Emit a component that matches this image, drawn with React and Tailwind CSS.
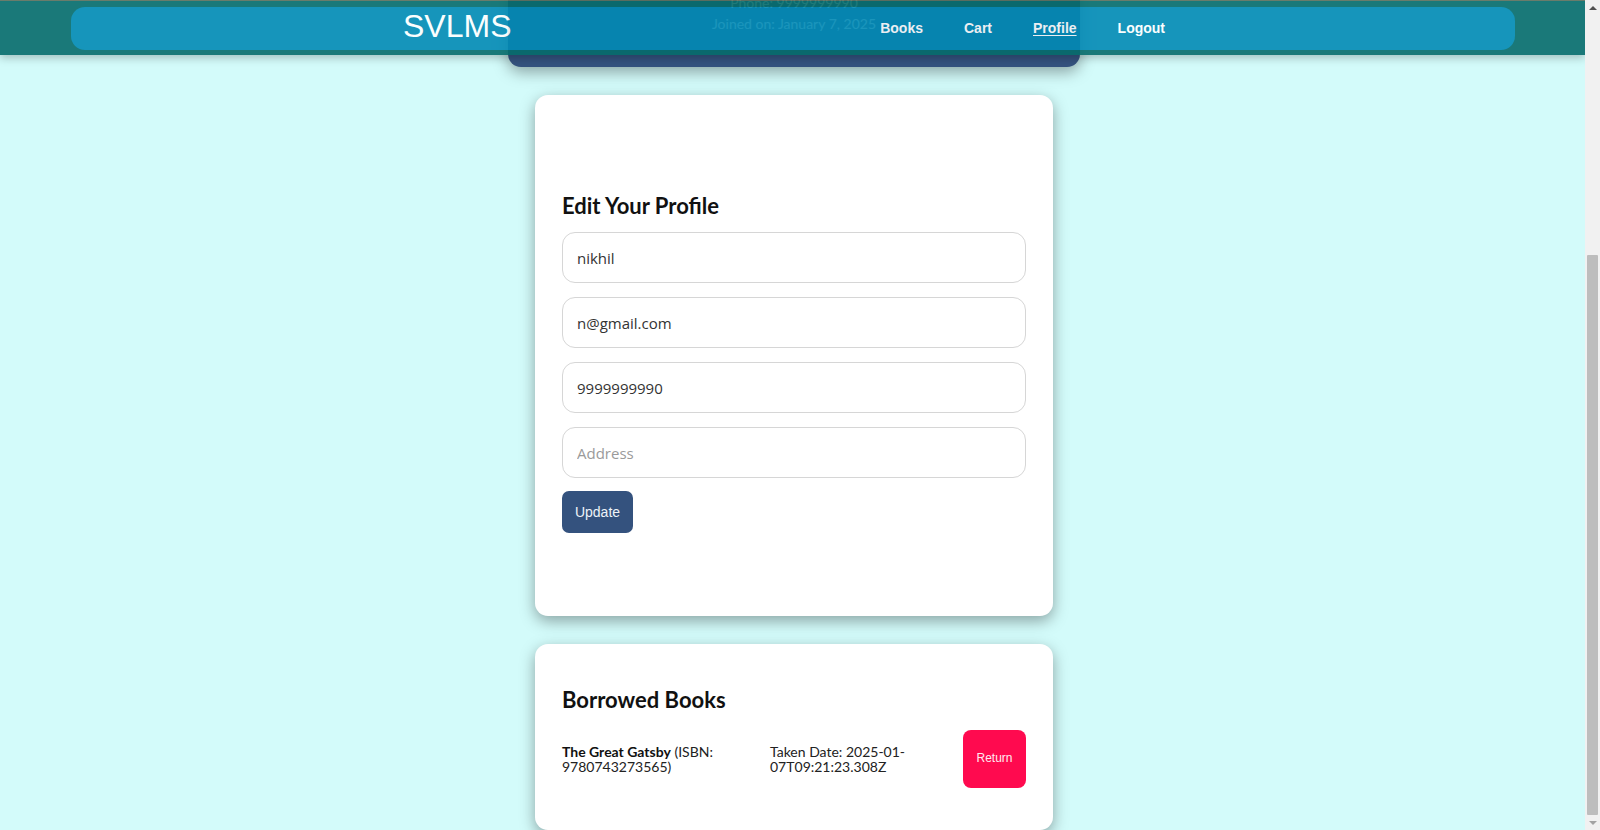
import React from "react";

const navLinks = [
  { label: "Books", active: false },
  { label: "Cart", active: false },
  { label: "Profile", active: true },
  { label: "Logout", active: false },
];

function Header() {
  return (
    <header className="absolute left-0 right-0 top-0 z-10 h-[55px] border-t border-[#5f6f5c] bg-[#066c6c] pl-[71px] pr-[70px] pt-[6px] opacity-90 shadow-[0_3px_8px_rgba(0,0,0,0.25)]">
      <div className="flex h-[43px] items-center justify-between rounded-[14px] bg-[#028ab5] pl-[332px] pr-[350px] font-['Liberation_Sans',Arial,sans-serif] text-white">
        <h1 className="mb-[6px] text-[32px] font-normal leading-none">SVLMS</h1>
        <nav className="flex items-center gap-[41px] text-[14px] font-bold">
          {navLinks.map((link) => (
            <a
              key={link.label}
              href="#"
              className={link.active ? "underline underline-offset-2" : ""}
            >
              {link.label}
            </a>
          ))}
        </nav>
      </div>
    </header>
  );
}

function ProfileCard() {
  return (
    <div className="w-[572px] shrink-0 rounded-[13px] bg-[#34527e] px-8 pb-[33px] pt-8 text-center font-['Lato',sans-serif] text-[14px] leading-[21px] text-white shadow-[0_5px_15px_rgba(0,0,0,0.35)]">
      <div className="mx-auto mb-4 flex h-20 w-20 items-center justify-center rounded-full bg-white/20 text-3xl font-bold">
        N
      </div>
      <h2 className="mb-2 text-[22px] font-bold leading-8">nikhil</h2>
      <p>Email: n@gmail.com</p>
      <p>Phone: 9999999990</p>
      <p>Joined on: January 7, 2025</p>
    </div>
  );
}

function EditProfile() {
  const inputClass =
    "block h-[51px] w-full rounded-[13px] border border-[#d6d6d6] bg-white px-[14px] font-['Open_Sans',sans-serif] text-[15px] text-[#333] outline-none placeholder:text-[#9a9a9a]";

  return (
    <div className="w-[518px] shrink-0 rounded-[13px] bg-white px-[27px] pb-[83px] pt-[95px] shadow-[0_5px_15px_rgba(0,0,0,0.35)]">
      <h2 className="font-['Lato',sans-serif] text-[22px] font-bold leading-[32px] text-[#111]">
        Edit Your Profile
      </h2>

      <form className="mt-[10px]">
        <input className={inputClass} defaultValue="nikhil" />
        <input className={inputClass + " mt-[14px]"} defaultValue="n@gmail.com" />
        <input className={inputClass + " mt-[14px]"} defaultValue="9999999990" />
        <input className={inputClass + " mt-[14px]"} placeholder="Address" />

        <button
          type="button"
          className="mt-[13px] h-[42px] w-[71px] rounded-[7px] bg-[#34527e] font-['Liberation_Sans',Arial,sans-serif] text-[14px] text-[#eef2f8]"
        >
          Update
        </button>
      </form>
    </div>
  );
}

function BorrowedBooks() {
  return (
    <div className="w-[518px] shrink-0 rounded-[13px] bg-white px-[27px] pb-[42px] pt-[40px] shadow-[0_5px_15px_rgba(0,0,0,0.35)]">
      <h2 className="font-['Lato',sans-serif] text-[22px] font-bold leading-[32px] text-[#111]">
        Borrowed Books
      </h2>

      <div className="mt-[14px] flex items-center font-['Lato',sans-serif] text-[14px] leading-[15.5px] text-[#222]">
        <p className="w-[200px]">
          <span className="font-bold text-[#111]">The Great Gatsby</span> (ISBN:
          9780743273565)
        </p>

        <p className="ml-[8px] w-[180px]">Taken Date: 2025-01-07T09:21:23.308Z</p>

        <button
          type="button"
          className="ml-auto flex h-[58px] w-[63px] items-center justify-center rounded-[8px] bg-[#ff0a4f] font-['Liberation_Sans',Arial,sans-serif] text-[12px] text-[#ffe9ef]"
        >
          Return
        </button>
      </div>
    </div>
  );
}

function Scrollbar() {
  return (
    <div className="flex w-[15px] shrink-0 flex-col bg-[#f1f1f1]">
      <div className="flex h-[15px] items-center justify-center">
        <div className="h-0 w-0 border-x-[4px] border-b-[4px] border-x-transparent border-b-[#505050]" />
      </div>
      <div className="flex flex-1 flex-col px-[2px]">
        <div className="h-[240px]" />
        <div className="flex-1 rounded-[1px] bg-[#bdbdbd]" />
      </div>
      <div className="flex h-[15px] items-center justify-center">
        <div className="h-0 w-0 border-x-[4px] border-t-[4px] border-x-transparent border-t-[#a3a3a3]" />
      </div>
    </div>
  );
}

export default function App() {
  return (
    <div className="flex h-screen overflow-hidden bg-[#d3fbfa]">
      <div className="relative flex flex-1 flex-col justify-end overflow-hidden">
        <Header />

        <main className="flex shrink-0 flex-col items-center gap-[28px] pl-[3px]">
          <ProfileCard />
          <EditProfile />
          <BorrowedBooks />
        </main>
      </div>

      <Scrollbar />
    </div>
  );
}
